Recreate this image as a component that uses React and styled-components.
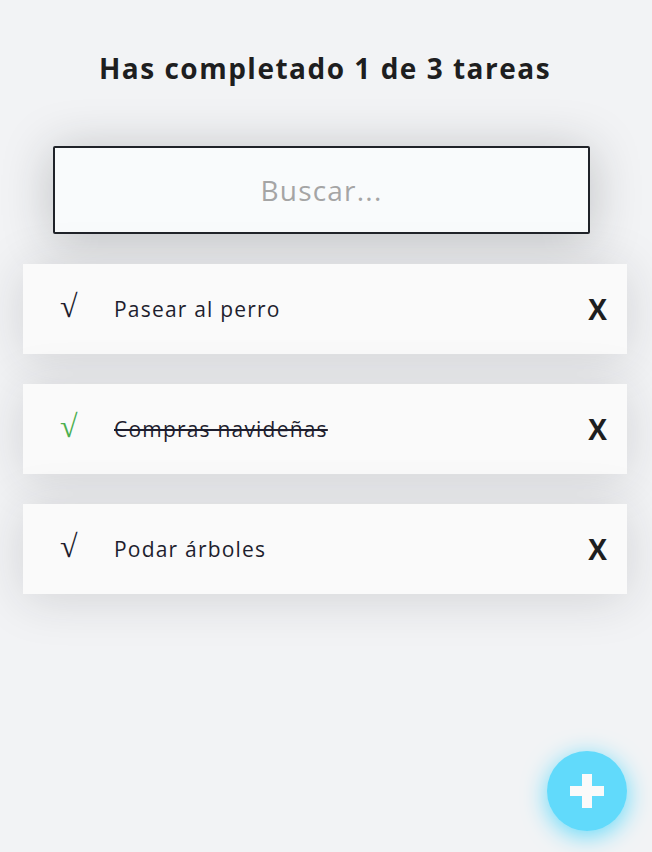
import { useState } from "react";
import styled, { createGlobalStyle } from "styled-components";

const GlobalStyle = createGlobalStyle`
  * {
    box-sizing: border-box;
  }
  body {
    margin: 0;
    background: #f2f3f5;
    font-family: "Open Sans", "Noto Sans", sans-serif;
    color: #1e1e1f;
  }
`;

const Page = styled.main`
  min-height: 100vh;
  padding: 48px 25px 40px 23px;
`;

const Counter = styled.h1`
  margin: 0;
  text-align: center;
  font-size: 28px;
  font-weight: 700;
  line-height: 40px;
  letter-spacing: 1.5px;
`;

const Search = styled.input`
  display: block;
  width: 537px;
  height: 88px;
  margin: 58px 0 30px 30px;
  padding: 0 20px;
  border: 2px solid #202329;
  border-radius: 2px;
  background: #f9fbfc;
  box-shadow: 0px 5px 50px rgba(32, 35, 41, 0.25);
  font-family: inherit;
  font-size: 28px;
  letter-spacing: 1.2px;
  text-align: center;
  color: #1e1e1f;
  outline: none;

  &::placeholder {
    color: #a5a5a5;
    font-weight: 400;
  }
`;

const List = styled.ul`
  margin: 0;
  padding: 0;
  list-style: none;
  display: flex;
  flex-direction: column;
  gap: 30px;
`;

const Item = styled.li`
  height: 90px;
  display: flex;
  align-items: center;
  padding: 0 20px 0 37px;
  background: #fafafa;
  box-shadow: 0px 5px 50px rgba(32, 35, 41, 0.15);
`;

const Check = styled.span`
  width: 54px;
  font-family: "Liberation Serif", "DejaVu Serif", serif;
  font-size: 32px;
  line-height: 1;
  margin-top: -6px;
  cursor: pointer;
  color: ${(props) => (props.$done ? "#4caf50" : "#1e1e2e")};
`;

const Text = styled.p`
  flex: 1;
  margin: 0;
  font-size: 21px;
  letter-spacing: 1.2px;
  color: #1e1e2e;
  text-decoration: ${(props) => (props.$done ? "line-through" : "none")};
  text-decoration-thickness: 2px;
`;

const Remove = styled.span`
  font-size: 28px;
  font-weight: 700;
  cursor: pointer;
  color: #1e1e1f;
`;

const Fab = styled.button`
  position: fixed;
  right: 25px;
  bottom: 21px;
  width: 80px;
  height: 80px;
  border: none;
  border-radius: 50%;
  background: #61dafb;
  box-shadow: 0px 5px 25px #61dafa;
  display: flex;
  align-items: center;
  justify-content: center;
  cursor: pointer;
  padding: 0;
`;

const initialTodos = [
  { text: "Pasear al perro", completed: false },
  { text: "Compras navideñas", completed: true },
  { text: "Podar árboles", completed: false },
];

export default function App() {
  const [todos] = useState(initialTodos);
  const completed = todos.filter((t) => t.completed).length;

  return (
    <Page>
      <GlobalStyle />
      <Counter>
        Has completado {completed} de {todos.length} tareas
      </Counter>
      <Search placeholder="Buscar..." />
      <List>
        {todos.map((todo) => (
          <Item key={todo.text}>
            <Check $done={todo.completed}>√</Check>
            <Text $done={todo.completed}>{todo.text}</Text>
            <Remove>X</Remove>
          </Item>
        ))}
      </List>
      <Fab aria-label="Agregar tarea">
        <svg width="34" height="34" viewBox="0 0 34 34">
          <rect x="12" y="0" width="10" height="34" fill="#fafafa" />
          <rect x="0" y="12" width="34" height="10" fill="#fafafa" />
        </svg>
      </Fab>
    </Page>
  );
}
